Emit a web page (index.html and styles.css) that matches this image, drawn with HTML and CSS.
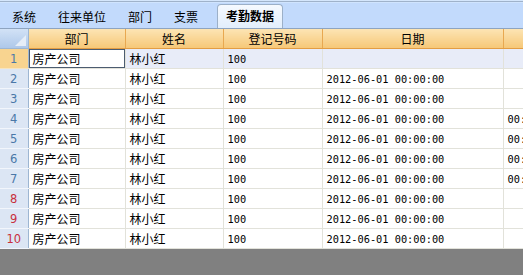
FILE: index.html
```html
<!DOCTYPE html>
<html>
<head>
    <title>考勤数据</title>
    <link rel="stylesheet" href="styles.css">
</head>
<body>
    <div class="window">
        <div class="tab-bar">
            <span class="tab">系统</span>
            <span class="tab">往来单位</span>
            <span class="tab">部门</span>
            <span class="tab">支票</span>
            <span class="tab active">考勤数据</span>
        </div>
        <div class="grid-wrap">
            <table class="grid">
                <colgroup>
                    <col class="col-rh">
                    <col class="col-dept">
                    <col class="col-name">
                    <col class="col-no">
                    <col class="col-date">
                    <col class="col-extra">
                </colgroup>
                <thead>
                    <tr>
                        <th class="corner"><span class="corner-tri"></span></th>
                        <th>部门</th>
                        <th>姓名</th>
                        <th>登记号码</th>
                        <th>日期</th>
                        <th></th>
                    </tr>
                </thead>
                <tbody>
                    <tr class="selected">
                        <td class="rh">1</td>
                        <td class="focus">房产公司</td>
                        <td>林小红</td>
                        <td class="num">100</td>
                        <td class="num"></td>
                        <td class="num"></td>
                    </tr>
                    <tr>
                        <td class="rh">2</td>
                        <td>房产公司</td>
                        <td>林小红</td>
                        <td class="num">100</td>
                        <td class="num">2012-06-01 00:00:00</td>
                        <td class="num"></td>
                    </tr>
                    <tr>
                        <td class="rh">3</td>
                        <td>房产公司</td>
                        <td>林小红</td>
                        <td class="num">100</td>
                        <td class="num">2012-06-01 00:00:00</td>
                        <td class="num"></td>
                    </tr>
                    <tr>
                        <td class="rh">4</td>
                        <td>房产公司</td>
                        <td>林小红</td>
                        <td class="num">100</td>
                        <td class="num">2012-06-01 00:00:00</td>
                        <td class="num">00:00:00</td>
                    </tr>
                    <tr>
                        <td class="rh">5</td>
                        <td>房产公司</td>
                        <td>林小红</td>
                        <td class="num">100</td>
                        <td class="num">2012-06-01 00:00:00</td>
                        <td class="num">00:00:00</td>
                    </tr>
                    <tr>
                        <td class="rh">6</td>
                        <td>房产公司</td>
                        <td>林小红</td>
                        <td class="num">100</td>
                        <td class="num">2012-06-01 00:00:00</td>
                        <td class="num">00:00:00</td>
                    </tr>
                    <tr>
                        <td class="rh">7</td>
                        <td>房产公司</td>
                        <td>林小红</td>
                        <td class="num">100</td>
                        <td class="num">2012-06-01 00:00:00</td>
                        <td class="num">00:00:00</td>
                    </tr>
                    <tr>
                        <td class="rh new">8</td>
                        <td>房产公司</td>
                        <td>林小红</td>
                        <td class="num">100</td>
                        <td class="num">2012-06-01 00:00:00</td>
                        <td class="num"></td>
                    </tr>
                    <tr>
                        <td class="rh new">9</td>
                        <td>房产公司</td>
                        <td>林小红</td>
                        <td class="num">100</td>
                        <td class="num">2012-06-01 00:00:00</td>
                        <td class="num"></td>
                    </tr>
                    <tr>
                        <td class="rh new">10</td>
                        <td>房产公司</td>
                        <td>林小红</td>
                        <td class="num">100</td>
                        <td class="num">2012-06-01 00:00:00</td>
                        <td class="num"></td>
                    </tr>
                </tbody>
            </table>
        </div>
    </div>
</body>
</html>
```

FILE: styles.css
```css
body {
    margin: 0;
    background-color: #808080;
    font-family: "Noto Sans CJK SC", "DejaVu Sans", sans-serif;
    font-size: 12px;
    color: #000000;
}
.window {
    width: 523px;
    overflow: hidden;
}
.tab-bar {
    display: flex;
    align-items: flex-end;
    height: 24px;
    padding-left: 1px;
    background-color: #c2dafc;
    border-top: 1px solid #d4e6fc;
    border-bottom: 1px solid #8ea4c0;
    box-shadow: inset 0 1px 0 #9fb2ca, inset 0 2px 0 #d0e4fe;
    padding-top: 3px;
}
.tab {
    height: 21px;
    line-height: 19px;
    padding: 0 11px;
    white-space: nowrap;
}
.tab.active {
    margin-left: 8px;
    padding: 0 8px;
    height: 23px;
    line-height: 22px;
    font-weight: bold;
    background: linear-gradient(#f6faff, #e2eefc);
    border: 1px solid #9cb0c8;
    border-bottom: none;
    border-radius: 4px 4px 0 0;
}
.grid-wrap {
    width: 523px;
    overflow: hidden;
}
.grid {
    table-layout: fixed;
    border-collapse: collapse;
    width: 560px;
    background-color: #ffffff;
}
.col-rh { width: 28px; }
.col-dept { width: 97px; }
.col-name { width: 98px; }
.col-no { width: 99px; }
.col-date { width: 181px; }
.col-extra { width: 57px; }
.grid th {
    height: 19px;
    padding: 0;
    font-weight: normal;
    text-align: center;
    background: linear-gradient(#fce4b4, #f6c878);
    border-right: 1px solid #e8a850;
    border-bottom: 1px solid #e39d43;
}
.grid th.corner {
    position: relative;
    background: linear-gradient(#d2e2f6, #aec8ea);
    border-right: 1px solid #9db6d2;
    border-bottom: 1px solid #9db6d2;
}
.corner-tri {
    position: absolute;
    right: 2px;
    bottom: 2px;
    width: 0;
    height: 0;
    border-left: 11px solid transparent;
    border-bottom: 11px solid #e6eef8;
}
.grid td {
    height: 19px;
    padding: 0 0 0 4px;
    white-space: nowrap;
    overflow: hidden;
    border-right: 1px solid #e2e2da;
    border-bottom: 1px solid #e2e2da;
}
.grid td.num {
    font-family: "DejaVu Sans Mono", "Liberation Mono", monospace;
    font-size: 10.3px;
}
.grid td.rh {
    padding: 0;
    text-align: center;
    font-family: "DejaVu Sans", sans-serif;
    font-size: 11.5px;
    color: #4a78a8;
    background-color: #dce6f4;
    border-right: 1px solid #9db6d2;
    border-bottom: 1px solid #f2f6fc;
}
.grid td.rh.new {
    color: #c8303c;
}
.selected td {
    background-color: #e8ecf8;
}
.selected td.rh {
    background-color: #f8d490;
    border-bottom-color: #f6e4c0;
}
.selected td.focus {
    background-color: #ffffff;
    box-shadow: inset 0 0 0 1px #4c5c70;
}
```
